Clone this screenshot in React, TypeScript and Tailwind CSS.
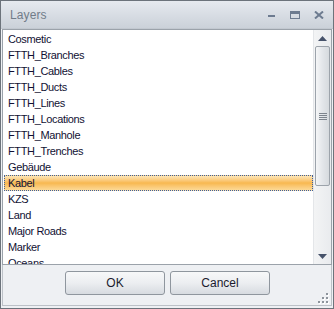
import { useState } from 'react'

const layers = [
  'Cosmetic',
  'FTTH_Branches',
  'FTTH_Cables',
  'FTTH_Ducts',
  'FTTH_Lines',
  'FTTH_Locations',
  'FTTH_Manhole',
  'FTTH_Trenches',
  'Gebäude',
  'Kabel',
  'KZS',
  'Land',
  'Major Roads',
  'Marker',
  'Oceans',
  'Rivers',
]

export default function App() {
  const [selected, setSelected] = useState('Kabel')

  return (
    <div className="relative w-[334px] h-[309px] flex flex-col border border-[#6c737b] bg-[#eef0f3] font-['Liberation_Sans',Arial,sans-serif] overflow-hidden">
      {/* Title bar */}
      <div className="h-[28px] shrink-0 flex items-center justify-between pl-[9px] pr-[9px] bg-gradient-to-b from-[#e6eaef] via-[#d8dde4] to-[#cbd1d9] border-b border-[#c2c8d0]">
        <span className="text-[12px] text-[#717c89] tracking-[0.1px]">Layers</span>
        <div className="flex items-center gap-[14px] pt-[1px]">
          <svg width="9" height="9" viewBox="0 0 9 9">
            <rect x="1" y="4" width="7" height="2" fill="#6d7b90" />
          </svg>
          <svg width="10" height="8" viewBox="0 0 10 8">
            <rect x="0.5" y="0.5" width="9" height="7" fill="none" stroke="#6d7b90" />
            <rect x="1" y="1" width="8" height="2" fill="#6d7b90" />
          </svg>
          <svg width="10" height="8" viewBox="0 0 10 8">
            <path d="M1 0.5 L9 7.5 M9 0.5 L1 7.5" stroke="#6d7b90" strokeWidth="2" />
          </svg>
        </div>
      </div>

      {/* List */}
      <div className="mx-[1px] h-[236px] shrink-0 flex border border-[#9ba2aa] bg-white">
        <div className="flex-1 overflow-hidden pt-[1px]">
          {layers.map((name) => (
            <div
              key={name}
              onClick={() => setSelected(name)}
              className={
                name === selected
                  ? 'h-[16px] ml-[1px] pl-[3px] flex items-center text-[11px] tracking-[-0.35px] text-[#111133] border border-dotted border-[#3f5f9c] bg-gradient-to-b from-[#fde6b6] via-[#f8b84f] to-[#fcd995]'
                  : 'h-[16px] ml-[1px] pl-[4px] flex items-center text-[11px] tracking-[-0.35px] text-[#111133]'
              }
            >
              {name}
            </div>
          ))}
        </div>

        {/* Scrollbar */}
        <div className="w-[18px] flex flex-col items-center border-l border-[#e4e6e9] bg-gradient-to-r from-[#f3f4f5] to-[#e9ebee]">
          <div className="h-[16px] w-full flex items-center justify-center">
            <svg width="9" height="5" viewBox="0 0 9 5">
              <path d="M0 5 L4.5 0 L9 5 Z" fill="#46526a" />
            </svg>
          </div>
          <div className="h-[140px] w-[15px] flex items-center justify-center rounded-[2px] border border-[#9ca3ab] bg-gradient-to-r from-[#f5f6f7] via-[#e3e6ea] to-[#d6dade]">
            <svg width="8" height="7" viewBox="0 0 8 7">
              <path d="M0 0.5 H8 M0 2.5 H8 M0 4.5 H8 M0 6.5 H8" stroke="#7d848d" />
            </svg>
          </div>
          <div className="flex-1" />
          <div className="h-[16px] w-full flex items-center justify-center">
            <svg width="9" height="5" viewBox="0 0 9 5">
              <path d="M0 0 L4.5 5 L9 0 Z" fill="#46526a" />
            </svg>
          </div>
        </div>
      </div>

      {/* Buttons */}
      <div className="flex-1 flex justify-center gap-[5px] pt-[6px] pl-[1px] border-x border-b border-[#bcc1c7] mx-[1px] mb-[2px] border-t-0">
        <button className="w-[100px] h-[24px] rounded-[3px] border border-[#8f969e] bg-gradient-to-b from-[#f7f8f9] via-[#eceef1] to-[#d7dbe0] text-[12px] text-[#1b1b2e]">
          OK
        </button>
        <button className="w-[100px] h-[24px] rounded-[3px] border border-[#8f969e] bg-gradient-to-b from-[#f7f8f9] via-[#eceef1] to-[#d7dbe0] text-[12px] text-[#1b1b2e]">
          Cancel
        </button>
      </div>

      {/* Resize grip */}
      <svg className="absolute right-[4px] bottom-[4px]" width="11" height="11" viewBox="0 0 11 11">
        {[
          [8, 0],
          [4, 4],
          [8, 4],
          [0, 8],
          [4, 8],
          [8, 8],
        ].map(([x, y]) => (
          <g key={`${x}-${y}`}>
            <rect x={x + 1} y={y + 1} width="2" height="2" fill="#ffffff" />
            <rect x={x} y={y} width="2" height="2" fill="#8d949c" />
          </g>
        ))}
      </svg>
    </div>
  )
}
